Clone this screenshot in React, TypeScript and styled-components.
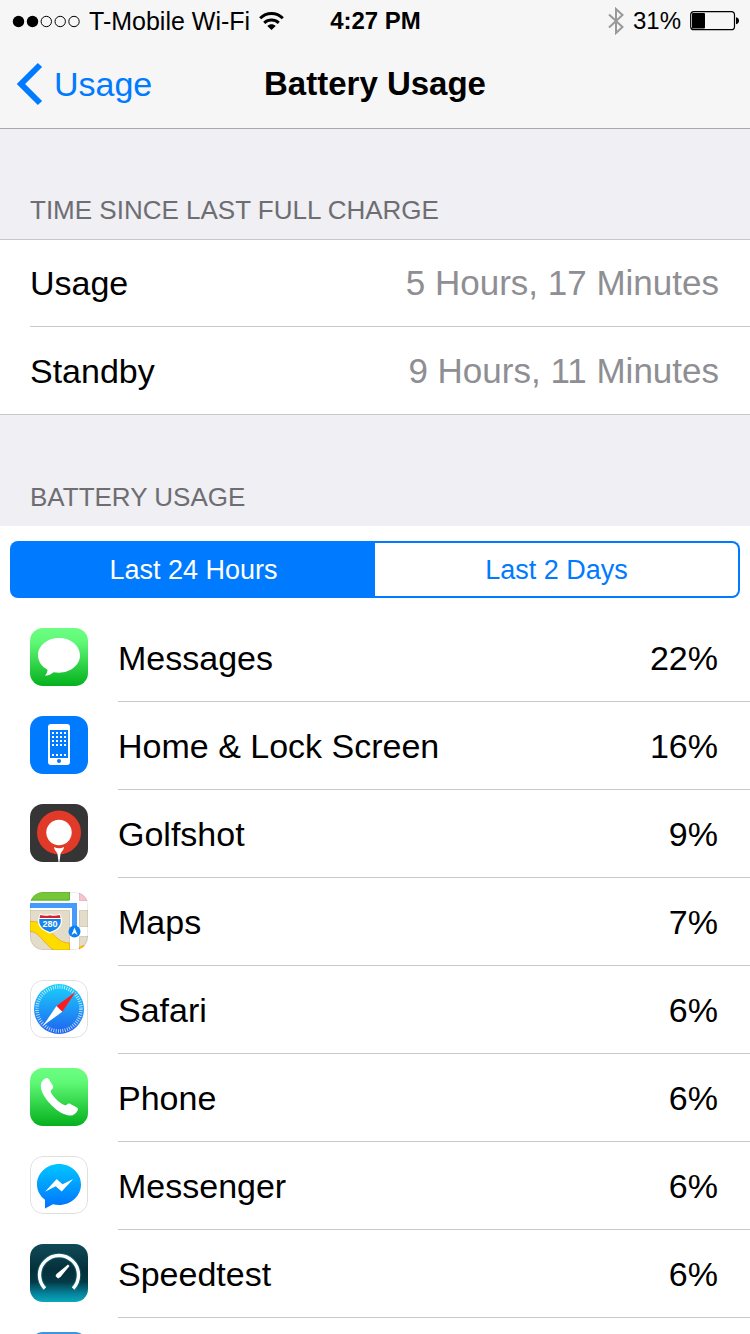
import React, { useState } from "react";
import styled, { createGlobalStyle } from "styled-components";

const GlobalStyle = createGlobalStyle`
  *, *::before, *::after { box-sizing: border-box; }
  body {
    margin: 0;
    background: #fff;
    color: #000;
    font-family: "Liberation Sans", Arial, sans-serif;
  }
  button { font-family: inherit; }
`;

const Screen = styled.div`
  height: 100vh;
  overflow-y: auto;
  scrollbar-width: none;
  background: #efeff4;
`;

const TopBar = styled.header`
  background: #f6f6f6;
  border-bottom: 1px solid #a9a9ac;
`;

const StatusBar = styled.div`
  display: grid;
  grid-template-columns: 1fr auto 1fr;
  align-items: center;
  height: 40px;
  padding: 0 11px 0 12px;
  font-size: 24px;
  line-height: 42px;
`;

const StatusGroup = styled.div<{ $end?: boolean }>`
  display: flex;
  align-items: center;
  justify-content: ${(p) => (p.$end ? "flex-end" : "flex-start")};
  gap: 9px;
  white-space: nowrap;
`;

const Carrier = styled.span`
  font-size: 25px;
`;

const Clock = styled.time`
  font-weight: 700;
`;

const NavBar = styled.nav`
  display: grid;
  grid-template-columns: 1fr auto 1fr;
  align-items: center;
  height: 88px;
  padding: 0 16px;
`;

const BackLink = styled.a`
  display: flex;
  align-items: center;
  gap: 11px;
  color: #007aff;
  font-size: 34px;
  line-height: 40px;
  text-decoration: none;
`;

const Title = styled.h1`
  margin: 0;
  font-size: 33px;
  line-height: 42px;
  font-weight: 700;
`;

const SectionTitle = styled.h2`
  margin: 0;
  padding: 66px 30px 14px;
  color: #6d6d72;
  font-size: 26px;
  line-height: 30px;
  font-weight: 400;
`;

const Facts = styled.dl`
  margin: 0 0 1px;
  padding-left: 30px;
  background: #fff;
  border-top: 1px solid #c8c7cc;
  border-bottom: 1px solid #c8c7cc;
`;

const Fact = styled.div`
  display: flex;
  align-items: center;
  justify-content: space-between;
  height: 87px;
  padding-right: 31px;
  font-size: 34px;
  line-height: 40px;

  &:not(:last-child) { border-bottom: 1px solid #c8c7cc; }
`;

const FactValue = styled.dd`
  margin: 0;
  color: #8e8e93;
  font-size: 35px;
`;

const UsagePanel = styled.div`
  background: #fff;
  padding-top: 15px;
`;

const Segments = styled.div`
  display: flex;
  height: 57px;
  margin: 0 10px 16px;
  padding: 2px;
  background: #007aff;
  border-radius: 8px;
`;

const Segment = styled.button<{ $on: boolean }>`
  flex: 1;
  border: 0;
  padding: 0;
  background: ${(p) => (p.$on ? "#007aff" : "#fff")};
  color: ${(p) => (p.$on ? "#fff" : "#007aff")};
  font-size: 27px;
  line-height: 32px;

  &:first-child { border-radius: 6px 0 0 6px; }
  &:last-child { border-radius: 0 6px 6px 0; }
`;

const AppList = styled.ul`
  margin: 0;
  padding: 0;
  list-style: none;
`;

const AppRow = styled.li`
  display: flex;
  gap: 30px;
  height: 88px;
  padding-left: 30px;
`;

const AppIcon = styled.svg`
  flex: none;
  width: 58px;
  height: 58px;
  margin-top: 14px;
  border-radius: 13px;
`;

const AppText = styled.div`
  flex: 1;
  display: flex;
  align-items: center;
  justify-content: space-between;
  padding-right: 32px;
  border-bottom: 1px solid #c8c7cc;
  font-size: 34px;
  line-height: 40px;
`;

type StopList = [string, string][];

const Fade = ({ id, stops }: { id: string; stops: StopList }) => (
  <defs>
    <linearGradient id={id} x1="0" y1="0" x2="0" y2="1">
      {stops.map(([offset, color]) => (
        <stop key={offset} offset={offset} stopColor={color} />
      ))}
    </linearGradient>
  </defs>
);

const Icon = ({ children }: { children: React.ReactNode }) => (
  <AppIcon viewBox="0 0 58 58" aria-hidden="true">{children}</AppIcon>
);

const Outline = () => (
  <rect x="0.5" y="0.5" width="57" height="57" rx="12.5" fill="#fff" stroke="#dfdfdf" />
);

const MessagesIcon = () => (
  <Icon>
    <Fade id="messages" stops={[["0", "#6cff83"], ["0.25", "#5ff876"], ["1", "#04b01c"]]} />
    <rect width="58" height="58" fill="url(#messages)" />
    <path
      fill="#fff"
      d="M29 10C17.400 10 8 17.600 8 27.300C8 33.300 11.500 38.500 17.500 41.700C17.400 44.300 16.500 46 14.800 47.600C18.500 47.600 21.300 46.200 23.600 44.200C25.300 44.500 27.100 44.700 29 44.700C40.600 44.700 50 37 50 27.300C50 17.600 40.600 10 29 10Z"
    />
  </Icon>
);

const HomeIcon = () => (
  <Icon>
    <rect width="58" height="58" fill="#007aff" />
    <rect x="18" y="8" width="22" height="41" rx="3" fill="#fff" />
    <rect x="20" y="14" width="18" height="28" fill="#007aff" />
    {[16, 20, 24, 28, 38].map((y) =>
      [22, 26, 30, 34].map((x) => (
        <rect key={`${x}-${y}`} x={x} y={y} width="2" height="2" fill="#fff" />
      ))
    )}
    <circle cx="29" cy="45" r="2" fill="#007aff" />
  </Icon>
);

const GolfshotIcon = () => (
  <Icon>
    <rect width="58" height="58" fill="#353535" />
    <circle cx="29" cy="28.500" r="22" fill="#e23a28" />
    <circle cx="29" cy="28.500" r="12.700" fill="#fff" />
    <path d="M24 43Q29 45.500 34 43C34 46 31.300 47.500 30.500 50L29.500 58H28.500L27.500 50C26.700 47.500 24 46 24 43Z" fill="#fff" />
  </Icon>
);

const MapsIcon = () => (
  <Icon>
    <rect width="58" height="58" fill="#fff" />
    <path d="M0 0H39.500V8.500H0Z" fill="#76c738" />
    <path d="M0 8H39.500V0" fill="none" stroke="#62ad2d" />
    <path d="M49.500 0H58V8.500H49.500Z" fill="#f7c3cd" stroke="#e3a9b4" strokeWidth="0.700" />
    <path d="M-1 18.500H39.500V59H-1Z" fill="#e3dcc9" stroke="#cdc5b0" strokeWidth="0.800" />
    <path d="M49.500 18.500H59V34.500H49.500Z" fill="#e3dcc9" stroke="#cdc5b0" strokeWidth="0.800" />
    <path d="M49.500 44.500H59V59H49.500Z" fill="#e3dcc9" stroke="#cdc5b0" strokeWidth="0.800" />
    <path d="M-1 29.500C7 29 12 31 18 37C26 45 30 51 39.500 51V59H25C17 54 12 46 7 42C4 39.500 2 39.500 -1 39.500Z" fill="#ffdc00" stroke="#f3ac1b" />
    <path d="M49.500 55L54 53.500V59H49.500Z" fill="#ffdc00" stroke="#f3ac1b" />
    <path d="M40 18H49V59H40Z" fill="#fff" />
    <path d="M0 11H47V36H42V16H0Z" fill="#459bfb" />
    <path d="M10 21.500C13 23 16 23 20 22C24 23 27 23 30 21.500C31 24 32 26 32 29C32 35 27 39 20 41.500C13 39 8 35 8 29C8 26 9 24 10 21.500Z" fill="#fff" />
    <path d="M10.300 23C14 24 17 24 20 23.200C23 24 26 24 29.700 23L30.500 26H9.500Z" fill="#d2232e" />
    <path d="M9.300 27H30.700C31.500 34 27 37.500 20 40C13 37.500 8.500 34 9.300 27Z" fill="#1584e8" />
    <text x="20" y="35" fill="#fff" fontSize="9" fontWeight="700" textAnchor="middle">280</text>
    <circle cx="44.500" cy="39.500" r="6" fill="#0b80f3" />
    <path d="M44.500 35.500L47.500 43L44.500 41L41.500 43Z" fill="#fff" />
    <rect x="0.500" y="0.500" width="57" height="57" rx="12.500" fill="none" stroke="#000" strokeOpacity="0.080" />
  </Icon>
);

const SafariIcon = () => (
  <Icon>
    <Fade id="safari" stops={[["0", "#1bd1fb"], ["1", "#1f62f0"]]} />
    <Outline />
    <circle cx="29" cy="29" r="25" fill="url(#safari)" />
    <circle cx="29" cy="29" r="22" fill="none" stroke="#fff" strokeOpacity="0.800" strokeWidth="3.600" strokeDasharray="0.800 1.504" />
    <path d="M45.500 12L32.300 31.800L29 29L26.500 26Z" fill="#ff1b1b" />
    <path d="M13 45.800L26.500 26L32.300 31.800Z" fill="#fff" />
  </Icon>
);

const PhoneIcon = () => (
  <Icon>
    <Fade id="phone" stops={[["0", "#6cff83"], ["0.25", "#5ff876"], ["1", "#04b01c"]]} />
    <rect width="58" height="58" fill="url(#phone)" />
    <path
      fill="#fff"
      d="M16.300 10.100C17.500 9.700 18.300 10.300 19.100 11.500L22.900 17.700C23.600 19 23.200 20 22.200 21C21 22.200 20.300 23 21.100 24.700C23.500 29 28.500 34 33.200 36.600C34.800 37.500 35.900 37.400 37 36.500C38.200 35.500 39.100 35.300 40.400 36L46.500 39.300C48 40.200 48.300 41 47.600 42.400C46 45.300 43.500 47.800 39.800 47.500C34 47 28 43.500 22 37.700C15.500 31.300 11 24 10.800 18C10.700 14.500 12.700 11.500 16.300 10.100Z"
    />
  </Icon>
);

const MessengerIcon = () => (
  <Icon>
    <Fade id="messenger" stops={[["0", "#00c6ff"], ["1", "#0072ff"]]} />
    <Outline />
    <path
      fill="url(#messenger)"
      d="M29 8C16.800 8 7 17.100 7 28.500C7 34.500 10 40 15 43.800V52.600L23 48.200C25 48.700 27 49 29 49C41.200 49 51 39.900 51 28.500C51 17.100 41.200 8 29 8Z"
    />
    <path d="M15 35.700L26.700 23L32.500 28.300L43.300 23L31.700 35.500L25.700 30.200Z" fill="#fff" />
  </Icon>
);

const SpeedtestIcon = () => (
  <Icon>
    <Fade id="speedtest" stops={[["0", "#104a57"], ["0.45", "#04303a"], ["0.65", "#043945"], ["0.85", "#06809a"], ["1", "#08aabb"]]} />
    <rect width="58" height="58" fill="url(#speedtest)" />
    <path d="M14.900 44.500A19.500 19.500 0 1 1 43.100 44.500" fill="none" stroke="#2fb4cf" strokeOpacity="0.250" strokeWidth="5.500" />
    <path d="M14.900 44.500A19.500 19.500 0 1 1 43.100 44.500" fill="none" stroke="#fff" strokeWidth="3.400" />
    <path d="M38 20.500L39.500 22L30.500 33L28 34.500L25.500 32L26.500 30Z" fill="#fff" />
  </Icon>
);

const BlueIcon = () => (
  <Icon>
    <rect width="58" height="58" fill="#3d95e0" />
  </Icon>
);

const SignalDots = () => (
  <svg width="68" height="14" viewBox="0 0 68 14" role="img" aria-label="Signal strength">
    {[6.5, 20.5, 34.3, 48.2, 62].map((cx, i) => (
      <circle key={cx} cx={cx} cy="7.500" r={i < 2 ? 5.7 : 5.2} fill={i < 2 ? "#000" : "none"} stroke={i < 2 ? "none" : "#000"} />
    ))}
  </svg>
);

const WifiMark = () => (
  <svg width="25" height="18" viewBox="0 0 25 18" role="img" aria-label="Connected">
    <g fill="none" stroke="#000" strokeWidth="3">
      <path d="M1.200 6.300C7.500 0 17.500 0 23.800 6.300" />
      <path d="M5.200 10.800C9.400 7 15.600 7 19.800 10.800" />
    </g>
    <path d="M8.300 13.900C10.700 11.700 14.300 11.700 16.700 13.900L12.500 18Z" fill="#000" />
  </svg>
);

const BluetoothMark = () => (
  <svg width="17" height="28" viewBox="0 0 17 28" role="img" aria-label="Bluetooth">
    <path d="M2 7.500L15.500 20L9 26V2L15.500 8L2 20.500" fill="none" stroke="#999" strokeWidth="2" />
  </svg>
);

const BatteryMark = () => (
  <svg width="49" height="20" viewBox="0 0 49 20" role="img" aria-label="Battery">
    <rect x="0.700" y="0.700" width="43.800" height="18" rx="3.300" fill="none" stroke="#000" strokeWidth="1.200" />
    <rect x="2" y="2" width="13" height="15.400" rx="1" fill="#000" />
    <path d="M46 6.200C48 6.700 49 8 49 9.700S48 12.700 46 13.200Z" fill="#000" />
  </svg>
);

const Chevron = () => (
  <svg width="27" height="44" viewBox="0 0 27 44" aria-hidden="true">
    <path d="M24 3L5 22L24 41" fill="none" stroke="#007aff" strokeWidth="6" />
  </svg>
);

const apps = [
  { name: "Messages", share: "22%", Art: MessagesIcon },
  { name: "Home & Lock Screen", share: "16%", Art: HomeIcon },
  { name: "Golfshot", share: "9%", Art: GolfshotIcon },
  { name: "Maps", share: "7%", Art: MapsIcon },
  { name: "Safari", share: "6%", Art: SafariIcon },
  { name: "Phone", share: "6%", Art: PhoneIcon },
  { name: "Messenger", share: "6%", Art: MessengerIcon },
  { name: "Speedtest", share: "6%", Art: SpeedtestIcon },
  { name: "", share: "", Art: BlueIcon },
];

const ranges = ["Last 24 Hours", "Last 2 Days"];

export default function App() {
  const [range, setRange] = useState(ranges[0]);

  return (
    <>
      <GlobalStyle />
      <Screen>
        <TopBar>
          <StatusBar>
            <StatusGroup>
              <SignalDots />
              <Carrier>T-Mobile Wi-Fi</Carrier>
              <WifiMark />
            </StatusGroup>
            <Clock>4:27 PM</Clock>
            <StatusGroup $end>
              <BluetoothMark />
              <span>31%</span>
              <BatteryMark />
            </StatusGroup>
          </StatusBar>
          <NavBar>
            <BackLink href="#usage">
              <Chevron />
              Usage
            </BackLink>
            <Title>Battery Usage</Title>
          </NavBar>
        </TopBar>
        <main>
          <SectionTitle>TIME SINCE LAST FULL CHARGE</SectionTitle>
          <Facts>
            <Fact>
              <dt>Usage</dt>
              <FactValue>5 Hours, 17 Minutes</FactValue>
            </Fact>
            <Fact>
              <dt>Standby</dt>
              <FactValue>9 Hours, 11 Minutes</FactValue>
            </Fact>
          </Facts>
          <SectionTitle>BATTERY USAGE</SectionTitle>
          <UsagePanel>
            <Segments role="group" aria-label="Period">
              {ranges.map((label) => (
                <Segment
                  key={label}
                  type="button"
                  $on={label === range}
                  aria-pressed={label === range}
                  onClick={() => setRange(label)}
                >
                  {label}
                </Segment>
              ))}
            </Segments>
            <AppList>
              {apps.map(({ name, share, Art }) => (
                <AppRow key={name}>
                  <Art />
                  <AppText>
                    <span>{name}</span>
                    <span>{share}</span>
                  </AppText>
                </AppRow>
              ))}
            </AppList>
          </UsagePanel>
        </main>
      </Screen>
    </>
  );
}
